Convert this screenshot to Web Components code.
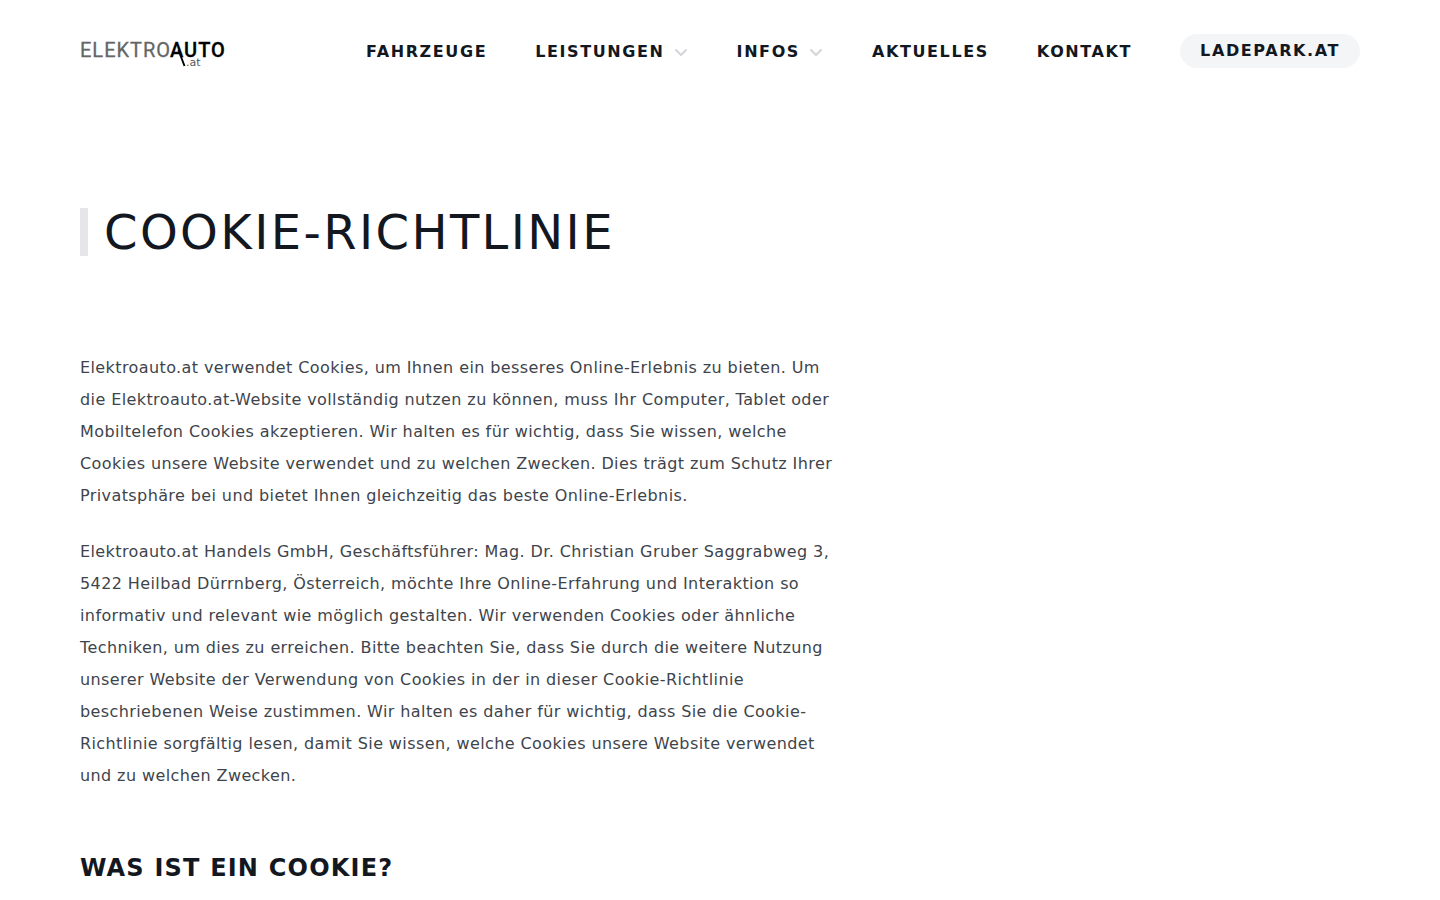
<!DOCTYPE html>
<html lang="de">
<head>
<meta charset="utf-8">
<meta name="viewport" content="width=device-width, initial-scale=1">
<title>Cookie-Richtlinie – Elektroauto.at</title>
<style>
body { margin: 0; background: #fff; color: #13171f; font-family: "DejaVu Sans", sans-serif; font-size: 16px; line-height: 24px; }
</style>
</head>
<body>
<cookie-page></cookie-page>
<script>
class Base extends HTMLElement {
  constructor() {
    super();
    this.attachShadow({ mode: 'open' }).innerHTML = this.constructor.markup;
  }
}

class BrandLogo extends Base {
  static markup = `
    <style>
      :host { display: block; flex: none; }
      a, svg { display: block; }
      svg { overflow: visible; }
      .word { font: 20px Roboto, sans-serif; letter-spacing: 1px; fill: #666; stroke: #666; stroke-width: .3; }
      .strong { font-weight: 500; fill: #000; stroke: #000; }
    </style>
    <a href="#" aria-label="Elektroauto.at">
      <svg width="146" height="34" viewBox="0 0 146 34">
        <text class="word" x="0" y="23">ELEKTRO</text>
        <text class="word strong" x="90" y="23">AUTO</text>
        <path d="M98.500 16L104.500 32" fill="none" stroke="#000" stroke-width="2"/>
        <text x="106" y="32" fill="#555" font-family="DejaVu Sans, sans-serif" font-size="11">.at</text>
      </svg>
    </a>`;
}

class NavItem extends Base {
  static markup = `
    <style>
      :host { display: block; }
      a { display: block; padding-top: 2px; font-weight: 700; letter-spacing: .1em; color: inherit; text-decoration: none; text-transform: uppercase; white-space: nowrap; }
      :host([pill]) a { padding: 5px 20px; border-radius: 17px; background: #f3f5f7; }
    </style>
    <a href="#"><slot></slot></a>`;
}

class NavMenu extends Base {
  static markup = `
    <style>
      :host { display: block; }
      button { display: flex; align-items: center; gap: 8px; padding: 2px 0 0; border: 0; background: none; font: inherit; font-weight: 700; letter-spacing: .1em; color: inherit; text-transform: uppercase; white-space: nowrap; cursor: pointer; }
      svg { display: block; overflow: visible; }
    </style>
    <button type="button" aria-haspopup="true"><slot></slot>
      <svg width="16" height="16" viewBox="0 0 16 16" fill="none" stroke="#d4d5d8" stroke-width="2" stroke-linecap="round" stroke-linejoin="round" aria-hidden="true"><path d="M3 6l5 5 5-5"/></svg>
    </button>`;
}

class SiteHeader extends Base {
  static markup = `
    <style>
      :host { display: block; }
      header { display: flex; align-items: center; justify-content: space-between; padding: 34px 80px 32px; }
      nav { display: flex; align-items: center; gap: 48px; }
    </style>
    <header>
      <brand-logo></brand-logo>
      <nav aria-label="Hauptnavigation">
        <nav-item>Fahrzeuge</nav-item>
        <nav-menu>Leistungen</nav-menu>
        <nav-menu>Infos</nav-menu>
        <nav-item>Aktuelles</nav-item>
        <nav-item>Kontakt</nav-item>
        <nav-item pill>Ladepark.at</nav-item>
      </nav>
    </header>`;
}

class PageTitle extends Base {
  static markup = `
    <style>
      :host { display: block; }
      h1 { margin: 0; padding-left: 16px; border-left: 8px solid #e5e5ea; font-size: 48px; line-height: 48px; font-weight: 400; letter-spacing: .05em; text-transform: uppercase; }
    </style>
    <h1><slot></slot></h1>`;
}

class ArticleBody extends Base {
  static markup = `
    <style>
      :host { display: block; max-width: 768px; letter-spacing: .025em; line-height: 32px; color: #3e444c; }
      ::slotted(p) { margin: 0 0 24px; }
      ::slotted(h2) { margin: 60px 0 24px; font-size: 24px; line-height: 32px; font-weight: 700; letter-spacing: .05em; text-transform: uppercase; color: #13171f; }
    </style>
    <slot></slot>`;
}

class CookiePage extends Base {
  static markup = `
    <style>
      :host { display: block; }
      main { padding: 108px 80px 0; }
      article-body { margin-top: 96px; }
    </style>
    <site-header></site-header>
    <main>
      <page-title>Cookie-Richtlinie</page-title>
      <article-body>
        <p>Elektroauto.at verwendet Cookies, um Ihnen ein besseres Online-Erlebnis zu bieten. Um die Elektroauto.at-Website vollständig nutzen zu können, muss Ihr Computer, Tablet oder Mobiltelefon Cookies akzeptieren. Wir halten es für wichtig, dass Sie wissen, welche Cookies unsere Website verwendet und zu welchen Zwecken. Dies trägt zum Schutz Ihrer Privatsphäre bei und bietet Ihnen gleichzeitig das beste Online-Erlebnis.</p>
        <p>Elektroauto.at Handels GmbH, Geschäftsführer: Mag. Dr. Christian Gruber Saggrabweg 3, 5422 Heilbad Dürrnberg, Österreich, möchte Ihre Online-Erfahrung und Interaktion so informativ und relevant wie möglich gestalten. Wir verwenden Cookies oder ähnliche Techniken, um dies zu erreichen. Bitte beachten Sie, dass Sie durch die weitere Nutzung unserer Website der Verwendung von Cookies in der in dieser Cookie-Richtlinie beschriebenen Weise zustimmen. Wir halten es daher für wichtig, dass Sie die Cookie-Richtlinie sorgfältig lesen, damit Sie wissen, welche Cookies unsere Website verwendet und zu welchen Zwecken.</p>
        <h2>Was ist ein Cookie?</h2>
      </article-body>
    </main>`;
}

customElements.define('brand-logo', BrandLogo);
customElements.define('nav-item', NavItem);
customElements.define('nav-menu', NavMenu);
customElements.define('site-header', SiteHeader);
customElements.define('page-title', PageTitle);
customElements.define('article-body', ArticleBody);
customElements.define('cookie-page', CookiePage);
</script>
</body>
</html>
